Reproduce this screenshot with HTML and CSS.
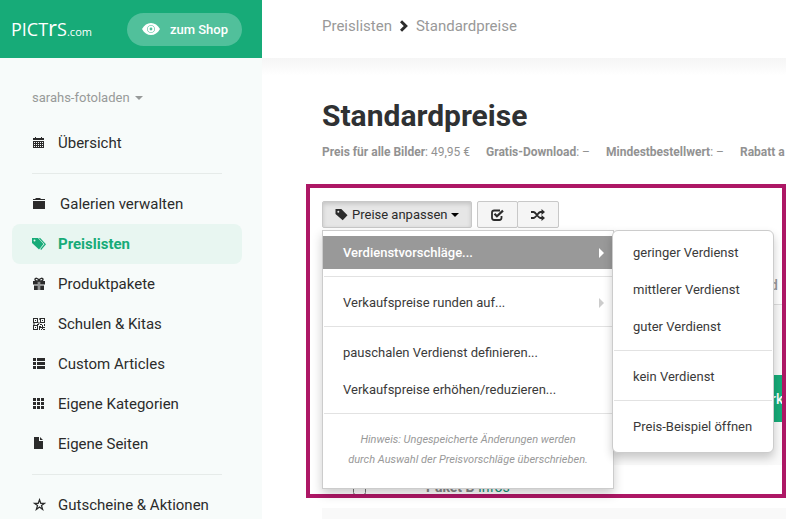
FILE: index.html
```html
<!DOCTYPE html>
<html lang="de">
<head>
<meta charset="utf-8">
<title>Standardpreise</title>
<link rel="stylesheet" href="styles.css">
</head>
<body>
<div class="app">
  <aside class="sidebar">
    <div class="brand">
      <a class="logo" href="#">PICT<span class="logo-r">r</span>S<span class="logo-tld">.com</span></a>
      <a class="shop-link" href="#">
        <svg class="eye" viewBox="0 0 18 12" width="18" height="12"><path fill="currentColor" fill-rule="evenodd" d="M0 6C2.200 2 5.400 0 9 0s6.800 2 9 6c-2.200 4-5.400 6-9 6S2.200 10 0 6zM9 2.200a3.800 3.800 0 1 0 0 7.600a3.800 3.800 0 1 0 0-7.600z"/><path fill="currentColor" fill-rule="evenodd" d="M9 2.800a3.200 3.200 0 1 0 0 6.400a3.200 3.200 0 1 0 0-6.400zM9 4.600a1.400 1.400 0 1 1 0 2.800a1.400 1.400 0 1 1 0-2.800z"/></svg>
        zum Shop
      </a>
    </div>
    <button class="account" type="button">sarahs-fotoladen <span class="caret"></span></button>
    <nav class="nav">
      <a class="nav-item" href="#">
        <svg class="icon" viewBox="0 0 14 14"><path fill="currentColor" d="M1 2h2V1h1v1h5V1h1v1h2v2H1z"/><path fill="currentColor" fill-rule="evenodd" d="M1 5h11v7H1zM2 6v1h1V6zM4 6v1h1V6zM6 6v1h1V6zM8 6v1h1V6zM10 6v1h1V6zM2 8v1h1V8zM4 8v1h1V8zM6 8v1h1V8zM8 8v1h1V8zM10 8v1h1V8zM2 10v1h1v-1zM4 10v1h1v-1zM6 10v1h1v-1zM8 10v1h1v-1zM10 10v1h1v-1z"/></svg>
        Übersicht
      </a>
      <hr class="rule">
      <a class="nav-item nav-item-wide" href="#">
        <svg class="icon" viewBox="0 0 14 14"><path fill="currentColor" d="M1 2h2l1-1h4l1 1h4v1H1zM1 4h12v8H1z"/></svg>
        Galerien verwalten
      </a>
      <a class="nav-item active" href="#" aria-current="page">
        <svg class="icon" viewBox="0 0 14 14"><path fill="currentColor" fill-rule="evenodd" d="M0 1h6l5.500 6-4.500 5.500L0 6zM2.500 2.500a1 1 0 1 0 0 2a1 1 0 1 0 0-2z"/><path fill="none" stroke="currentColor" stroke-width="1.200" d="M7.500 1.200L13.200 7.200 8.700 12.500"/></svg>
        Preislisten
      </a>
      <a class="nav-item" href="#">
        <svg class="icon" viewBox="0 0 14 14"><path fill="none" stroke="currentColor" stroke-width="1.400" d="M7 4C5.500 4 3 3.800 3 2.400 3 .8 6 .8 7 3.600 8 .8 11 .8 11 2.400 11 3.800 8.500 4 7 4z"/><path fill="currentColor" d="M1 4h4.800v3.500H1zM8.200 4H13v3.500H8.200zM2 8.500h3.800V13H2zM8.200 8.500H12V13H8.200z"/><path fill="currentColor" opacity=".5" d="M5.800 4h2.400v9H5.800z"/></svg>
        Produktpakete
      </a>
      <a class="nav-item" href="#">
        <svg class="icon" viewBox="0 0 14 14"><path fill="currentColor" fill-rule="evenodd" d="M1 1h5v5H1zM2 2v3h3V2zM8 1h5v5H8zM9 2v3h3V2zM1 8h5v5H1zM2 9v3h3V9z"/><path fill="currentColor" d="M3 3h1v1H3zM10 3h1v1h-1zM3 10h1v1H3zM7 1h.6v2H7zM6.400 5h1v2h-1zM1 6.600h2v.8H1zM5 7h2v1H5zM8 7h2v1H8zM12 7h1v2h-1zM7 9h2v1h1V8h1v2h2v1h-2v1h-1v-1H8v2H7zM9 12h1v1H9zM11 12h2v1h-2z"/></svg>
        Schulen &amp; Kitas
      </a>
      <a class="nav-item" href="#">
        <svg class="icon" viewBox="0 0 14 14"><path fill="currentColor" d="M1 1h3v3H1zM5 1h8v3H5zM1 5h3v3H1zM5 5h8v3H5zM1 9h3v3H1zM5 9h8v3H5z"/></svg>
        Custom Articles
      </a>
      <a class="nav-item" href="#">
        <svg class="icon" viewBox="0 0 14 14"><path fill="currentColor" d="M1 1h3v3H1zM5 1h3v3H5zM9 1h3v3H9zM1 5h3v3H1zM5 5h3v3H5zM9 5h3v3H9zM1 9h3v3H1zM5 9h3v3H5zM9 9h3v3H9z"/></svg>
        Eigene Kategorien
      </a>
      <a class="nav-item" href="#">
        <svg class="icon" viewBox="0 0 14 14"><path fill="currentColor" d="M2 0h5v4h4v8H2zM8 0l3 3H8z"/></svg>
        Eigene Seiten
      </a>
      <hr class="rule">
      <a class="nav-item" href="#">
        <svg class="icon" viewBox="0 0 14 14"><path fill="none" stroke="currentColor" stroke-width="1.300" d="M7.500 1.800l1.300 3.600h3.600L9.500 7.600l1.100 3.800-3.100-2.300-3.100 2.300 1.100-3.800-2.900-2.200h3.600z"/></svg>
        Gutscheine &amp; Aktionen
      </a>
    </nav>
  </aside>

  <main class="main">
    <header class="topbar">
      <a class="crumb" href="#">Preislisten</a>
      <svg class="chevron" viewBox="0 0 8 12" width="8" height="12"><path fill="none" stroke="currentColor" stroke-width="3" d="M1 1.200L5.800 6 1 10.800"/></svg>
      <span class="crumb">Standardpreise</span>
    </header>

    <div class="content">
      <h1 class="title">Standardpreise</h1>
      <div class="meta">
        <span><b>Preis für alle Bilder</b>: 49,95 €</span>
        <span><b>Gratis-Download</b>: –</span>
        <span><b>Mindestbestellwert</b>: –</span>
        <span><b>Rabatt a</b></span>
      </div>

      <div class="toolbar">
        <button class="btn pressed" type="button">
          <svg viewBox="0 0 13 13" width="13" height="13"><path fill="currentColor" fill-rule="evenodd" d="M.5 1h5.800l6.200 6.200-4.800 5L.5 6zM3.300 2.800a1 1 0 1 0 0 2a1 1 0 1 0 0-2z"/></svg>
          Preise anpassen<span class="caret caret-dark"></span>
        </button>
        <div class="btn-group">
          <button class="btn" type="button" aria-label="Auswählen">
            <svg viewBox="0 0 13 12" width="13" height="12"><path fill="none" stroke="currentColor" stroke-width="1.800" d="M9 1.500H3.200A2.200 2.200 0 0 0 1 3.700v5.100A2.200 2.200 0 0 0 3.200 11h5.100a2.200 2.200 0 0 0 2.200-2.200V7"/><path fill="none" stroke="currentColor" stroke-width="2.200" d="M3.500 4.800l2.400 2.400L12 1.600"/></svg>
          </button>
          <button class="btn" type="button" aria-label="Mischen">
            <svg viewBox="0 0 14 12" width="14" height="12"><path fill="none" stroke="currentColor" stroke-width="1.800" d="M0 3h2.500C5 3 7 9 9.500 9H11M0 9h2.500C5 9 7 3 9.500 3H11"/><path fill="currentColor" d="M10.500 0L14 3l-3.500 3zM10.500 6L14 9l-3.500 3z"/></svg>
          </button>
        </div>

        <div class="menu">
          <button class="menu-item selected has-sub" type="button">Verdienstvorschläge...</button>
          <hr class="menu-rule">
          <button class="menu-item has-sub" type="button">Verkaufspreise runden auf...</button>
          <hr class="menu-rule">
          <button class="menu-item" type="button">pauschalen Verdienst definieren...</button>
          <button class="menu-item" type="button">Verkaufspreise erhöhen/reduzieren...</button>
          <hr class="menu-rule">
          <p class="hint">Hinweis: Ungespeicherte Änderungen werden<br>durch Auswahl der Preisvorschläge überschrieben.</p>
          <div class="menu submenu">
            <button class="menu-item" type="button">geringer Verdienst</button>
            <button class="menu-item" type="button">mittlerer Verdienst</button>
            <button class="menu-item" type="button">guter Verdienst</button>
            <hr class="menu-rule">
            <button class="menu-item" type="button">kein Verdienst</button>
            <hr class="menu-rule">
            <button class="menu-item" type="button">Preis-Beispiel öffnen</button>
          </div>
        </div>
      </div>

      <table class="prices">
        <thead>
          <tr><th class="col-check"></th><th></th><th class="col-action">d</th></tr>
        </thead>
        <tbody>
          <tr class="row-tall"><td></td><td></td><td><button class="save" type="button">rk</button></td></tr>
          <tr class="row"><td><input class="check" type="checkbox" aria-label="Paket B"></td><td class="name"><b>Paket B</b> <a href="#">Infos</a></td><td></td></tr>
          <tr class="row"><td></td><td></td><td></td></tr>
        </tbody>
      </table>
      <div class="highlight"></div>
    </div>
  </main>
</div>
</body>
</html>
```

FILE: styles.css
```css
* {
  box-sizing: border-box;
}

body {
  margin: 0;
  font-family: Roboto, "Liberation Sans", sans-serif;
  font-size: 15px;
  color: #2b2b2b;
  background: #fff;
}

a {
  color: inherit;
  text-decoration: none;
}

button {
  font: inherit;
  color: inherit;
  border: 0;
  background: none;
  cursor: pointer;
}

.app {
  display: grid;
  grid-template-columns: 262px minmax(0, 1fr);
  height: 100vh;
  overflow: hidden;
}

/* Sidebar */
.sidebar {
  background: #f7fbfa;
}

.brand {
  display: flex;
  align-items: center;
  justify-content: space-between;
  height: 58px;
  padding: 0 20px 0 11px;
  background: #17ab78;
  color: #fff;
}

.logo {
  font-family: "Open Sans", "Noto Sans", sans-serif;
  font-size: 18px;
  line-height: 24px;
}

.logo-r {
  font-size: 22px;
}

.logo-tld {
  font-size: 11px;
}

.shop-link {
  display: flex;
  align-items: center;
  gap: 10px;
  height: 33px;
  padding: 0 14px 0 15px;
  border-radius: 17px;
  background: #51c09b;
  font-size: 13px;
  font-weight: 500;
}

.account {
  display: flex;
  align-items: center;
  gap: 5px;
  margin: 30px 0 15px 32px;
  padding: 0;
  font-size: 13px;
  line-height: 20px;
  color: #979a99;
}

.caret {
  border: 4px solid transparent;
  border-top-color: currentColor;
  border-bottom: 0;
}

.caret-dark {
  color: #000;
}

.nav {
  padding: 0 20px 0 12px;
}

.nav-item {
  display: flex;
  align-items: center;
  gap: 12px;
  height: 40px;
  padding: 0 20px;
  border-radius: 8px;
}

.nav-item-wide {
  gap: 14px;
}

.nav-item.active {
  background: #e8f6f1;
  color: #17ab78;
  font-weight: 700;
}

.icon {
  width: 14px;
  height: 14px;
}

.rule {
  height: 1px;
  margin: 10px 20px;
  border: 0;
  background: #e6ebe9;
}

/* Main column */
.main {
  min-width: 0;
}

.topbar {
  display: flex;
  align-items: center;
  gap: 8px;
  height: 58px;
  padding: 0 60px 6px;
}

.crumb {
  color: #999;
}

.content {
  position: relative;
  padding: 40px 0 0 60px;
  background: linear-gradient(#f5f5f5, #fff 18px);
}

.title {
  margin: 0;
  font-size: 30px;
  line-height: 36px;
  color: #2f3133;
}

.meta {
  display: flex;
  gap: 16px;
  margin-top: 8px;
  overflow: hidden;
  font-size: 12px;
  line-height: 20px;
  white-space: nowrap;
  color: #929292;
}

.toolbar {
  position: relative;
  display: flex;
  gap: 5px;
  margin: 39px 0 30px;
}

.btn {
  display: flex;
  align-items: center;
  gap: 4px;
  height: 27px;
  padding: 0 12px;
  border: 1px solid #c8c8c8;
  border-radius: 2px;
  background: #f5f5f5;
  font-size: 13px;
}

.btn.pressed {
  background: #e6e6e6;
  box-shadow: inset 0 2px 4px rgba(0, 0, 0, 0.15);
}

.btn-group {
  display: flex;
}

.btn-group .btn {
  padding: 0 13px;
}

.btn-group .btn + .btn {
  margin-left: -1px;
}

.menu {
  position: absolute;
  z-index: 2;
  top: 29px;
  left: 0;
  width: 292px;
  padding: 5px 0;
  border: 1px solid #ccc;
  background: #fff;
  box-shadow: 0 5px 10px rgba(0, 0, 0, 0.2);
}

.submenu {
  top: -1px;
  left: 289px;
  width: 162px;
  border-radius: 6px;
}

.menu-item {
  display: flex;
  align-items: center;
  justify-content: space-between;
  width: 100%;
  height: 33px;
  margin-bottom: 4px;
  padding: 0 9px 0 20px;
  font-size: 13px;
  white-space: nowrap;
  color: #3a3a3a;
}

.menu-item.selected {
  background: #999;
  color: #fff;
  font-weight: 500;
}

.has-sub::after {
  content: "";
  border: 5px solid transparent;
  border-left-color: #ccc;
  border-right: 0;
}

.selected::after {
  border-left-color: #fff;
}

.menu-rule {
  height: 1px;
  margin: 7px 1px 9px;
  border: 0;
  background: #e2e2e2;
}

.hint {
  margin: 16px 0 13px;
  font-size: 11px;
  font-style: italic;
  line-height: 20px;
  text-align: center;
  color: #999;
}

/* Price table */
.prices {
  width: 100%;
  border-collapse: collapse;
  table-layout: fixed;
}

.prices th,
.prices td {
  padding: 0;
  text-align: left;
}

.prices th {
  height: 46px;
  padding-top: 8px;
  border-bottom: 1px solid #ddd;
  font-size: 14px;
  font-weight: 500;
  color: #999;
}

.col-check {
  width: 104px;
}

.col-action {
  width: 46px;
}

.prices .col-action {
  padding-left: 30px;
}

.row-tall {
  height: 161px;
}

.row {
  height: 43px;
}

.prices tbody tr:nth-child(odd) {
  background: #f9f9f9;
}

.save {
  width: 100%;
  height: 47px;
  margin-top: 28px;
  padding: 0 0 0 31px;
  background: #17ab78;
  font-size: 14px;
  font-weight: 500;
  text-align: left;
  color: #fff;
}

.check {
  display: block;
  width: 13px;
  height: 13px;
  margin: 4px 0 0 31px;
}

.name {
  font-size: 14px;
  color: #888;
}

.name a {
  color: #17957a;
}

.highlight {
  position: absolute;
  z-index: 1;
  top: 126px;
  right: 0;
  left: 44px;
  height: 314px;
  border: 4px solid #ad1765;
  pointer-events: none;
}
```
